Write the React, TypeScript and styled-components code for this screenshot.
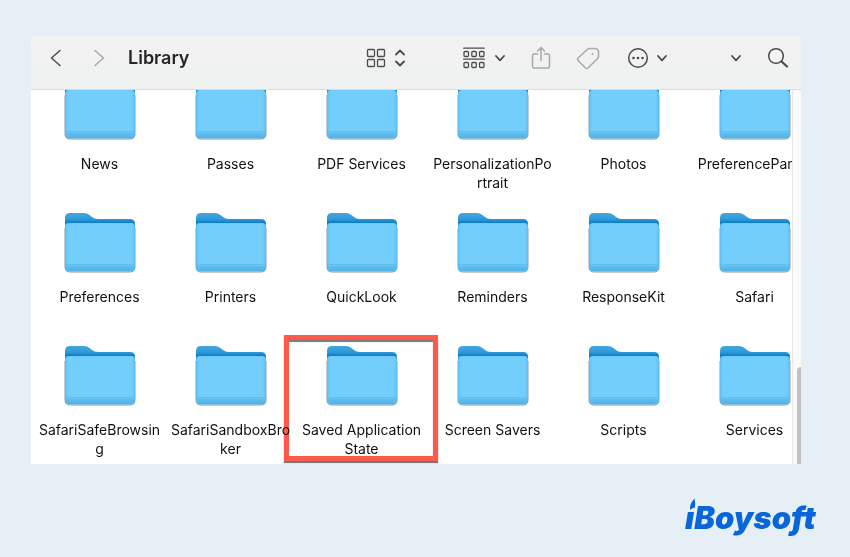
import React from "react";
import styled, { createGlobalStyle, css } from "styled-components";

const GlobalStyle = createGlobalStyle`
  * { box-sizing: border-box; }
  body {
    margin: 0;
    background: #e7eff6;
    font-family: Inter, "Liberation Sans", sans-serif;
    color: #111;
  }
`;

const Page = styled.main`
  display: flex;
  flex-direction: column;
  min-height: 100vh;
  padding: 36px 49px 0 31px;
`;

const FinderWindow = styled.section`
  background: #fff;
`;

const Toolbar = styled.header`
  display: flex;
  align-items: center;
  height: 54px;
  padding: 0 12px 9px 16px;
  background: linear-gradient(#f2f2f2, #eff1f1);
  border-bottom: 1px solid #dcdcdc;
`;

const Title = styled.h1`
  margin: 0 0 0 23px;
  flex: 1;
  font-size: 18px;
  line-height: 22px;
  font-weight: 600;
  color: #262626;
`;

const Tools = styled.div`
  display: flex;
  align-items: center;
`;

const ToolButton = styled.button<{ $dim?: boolean; $gap?: number }>`
  display: flex;
  align-items: center;
  padding: 0;
  margin: 0 0 0 ${(p) => p.$gap ?? 0}px;
  border: 0;
  background: none;
  color: ${(p) => (p.$dim ? "#a9a9a9" : "#4c4c4c")};
  svg { display: block; }
`;

const Icon = styled.svg`
  fill: none;
  stroke: currentColor;
  stroke-width: 1.5;
  stroke-linecap: round;
  stroke-linejoin: round;
`;

const FineIcon = styled(Icon)`
  stroke-width: 1.3;
`;

const BoldIcon = styled(Icon)`
  stroke-width: 1.8;
`;

const Body = styled.div`
  display: flex;
`;

const Scroller = styled.div`
  flex: 1;
  min-width: 0;
  overflow: hidden;
`;

const FolderGrid = styled.ul`
  display: grid;
  grid-template-columns: repeat(6, 131px);
  row-gap: 21px;
  margin: -10px 0 0;
  padding: 0 0 6px 3px;
  list-style: none;
`;

const Cell = styled.li<{ $marked?: boolean }>`
  position: relative;
  display: flex;
  flex-direction: column;
  align-items: center;
  gap: 13px;
  ${(p) =>
    p.$marked &&
    css`
      &::after {
        content: "";
        position: absolute;
        inset: -11px -11px -3px -12px;
        border: 5px solid #fd5a4c;
        box-shadow: 0 2px 1px #777, inset 0 2px 1px #777;
        mix-blend-mode: multiply;
      }
    `}
`;

const Label = styled.span`
  width: 122px;
  min-height: 38px;
  font-size: 14px;
  line-height: 19px;
  text-align: center;
  overflow-wrap: anywhere;
`;

const Track = styled.div`
  display: flex;
  flex-direction: column;
  align-items: flex-end;
  justify-content: flex-end;
  width: 9px;
  background: #fafafa;
  border-left: 1px solid #e6e6e6;
`;

const Thumb = styled.div`
  width: 4px;
  height: 26%;
  border-radius: 4px 0 0 0;
  background: #c1c1c1;
`;

const Brand = styled.footer`
  display: flex;
  justify-content: flex-end;
  margin: 33px -17px 0 0;
`;

const Logo = styled.svg`
  display: block;
  overflow: visible;
  fill: #0866d9;
  font-family: Inter, "Liberation Sans", sans-serif;
  font-size: 31px;
  font-weight: 900;
  font-style: italic;
`;

const Defs = styled.svg`
  position: absolute;
`;

const folders = [
  "News", "Passes", "PDF Services", "PersonalizationPortrait", "Photos", "PreferencePanes",
  "Preferences", "Printers", "QuickLook", "Reminders", "ResponseKit", "Safari",
  "SafariSafeBrowsing", "SafariSandboxBroker", "Saved Application State", "Screen Savers", "Scripts", "Services",
];

function FolderGradients() {
  return (
    <Defs width="0" height="0" aria-hidden="true">
      <defs>
        <linearGradient id="folder-back" x1="0" y1="0" x2="0" y2="12" gradientUnits="userSpaceOnUse">
          <stop offset="0" stopColor="#43a6de" />
          <stop offset="0.5" stopColor="#309bd9" />
          <stop offset="0.8" stopColor="#0d7fc9" />
        </linearGradient>
        <linearGradient id="folder-front" x1="0" y1="9" x2="0" y2="59" gradientUnits="userSpaceOnUse">
          <stop offset="0" stopColor="#69c5f3" />
          <stop offset="0.05" stopColor="#73cefb" />
          <stop offset="0.83" stopColor="#73cefb" />
          <stop offset="0.84" stopColor="#61bff0" />
          <stop offset="0.9" stopColor="#5dbbed" />
          <stop offset="1" stopColor="#4eafe6" />
        </linearGradient>
        <linearGradient id="folder-edge" x1="0" y1="0" x2="1" y2="0">
          <stop offset="0" stopColor="#4db5ec" stopOpacity="0.7" />
          <stop offset="0.06" stopColor="#73cefb" stopOpacity="0" />
          <stop offset="0.94" stopColor="#73cefb" stopOpacity="0" />
          <stop offset="1" stopColor="#4db5ec" stopOpacity="0.7" />
        </linearGradient>
      </defs>
    </Defs>
  );
}

function Folder() {
  const front = "M1 14Q1 10 5 10H67Q71 10 71 14V54Q71 58.500 66.500 58.500H5.500Q1 58.500 1 54Z";
  return (
    <svg width="72" height="61" viewBox="0 0 72 61" aria-hidden="true">
      <path d="M1 15V54Q1 59 6 59H66Q71 59 71 54V15" fill="none" stroke="#5f7280" strokeOpacity="0.7" />
      <path d="M1 16V5Q1 0 6 0H20Q23 0 25.500 2L28 4Q30 6 34 6H66Q71 6 71 11V16Z" fill="url(#folder-back)" />
      <path d={front} fill="url(#folder-front)" />
      <path d={front} fill="url(#folder-edge)" />
      <path d="M1.500 52.500H70.500" stroke="#68c4f2" fill="none" />
    </svg>
  );
}

function Chevron() {
  return (
    <BoldIcon width="10" height="7" viewBox="0 0 10 7">
      <path d="M1 1L5 5.300L9 1" />
    </BoldIcon>
  );
}

function App() {
  return (
    <Page>
      <GlobalStyle />
      <FolderGradients />
      <FinderWindow aria-label="Library">
        <Toolbar>
          <ToolButton aria-label="Back" $gap={3}>
            <Icon width="12" height="18" viewBox="0 0 12 18"><path d="M10 1.500L1.500 9L10 16.500" /></Icon>
          </ToolButton>
          <ToolButton aria-label="Forward" $gap={31} $dim>
            <Icon width="12" height="18" viewBox="0 0 12 18"><path d="M2 1.500L10.500 9L2 16.500" /></Icon>
          </ToolButton>
          <Title>Library</Title>
          <Tools>
            <ToolButton aria-label="Change view">
              <Icon width="40" height="20" viewBox="0 0 40 20">
                <g strokeWidth="1.3">
                  <rect x="1.500" y="1.500" width="7" height="7" rx="1" />
                  <rect x="11.500" y="1.500" width="7" height="7" rx="1" />
                  <rect x="1.500" y="11.500" width="7" height="7" rx="1" />
                  <rect x="11.500" y="11.500" width="7" height="7" rx="1" />
                </g>
                <path d="M30 6.500L34 2.500L38 6.500M30 13.500L34 17.500L38 13.500" strokeWidth="1.800" />
              </Icon>
            </ToolButton>
            <ToolButton aria-label="Group items" $gap={57}>
              <FineIcon width="32" height="22" viewBox="0 0 32 22">
                <path d="M.7 1.200H21.300M.7 12.200H21.300" />
                <rect x="1" y="4.500" width="4.500" height="5" rx="1" />
                <rect x="8.800" y="4.500" width="4.500" height="5" rx="1" />
                <rect x="16.500" y="4.500" width="4.500" height="5" rx="1" />
                <rect x="1" y="15.500" width="4.500" height="5" rx="1" />
                <rect x="8.800" y="15.500" width="4.500" height="5" rx="1" />
                <rect x="16.500" y="15.500" width="4.500" height="5" rx="1" />
              </FineIcon>
              <Chevron />
            </ToolButton>
            <ToolButton aria-label="Share" $gap={26} $dim>
              <Icon width="20" height="24" viewBox="0 0 20 24">
                <path d="M6.500 8H3Q1.500 8 1.500 9.500V20.500Q1.500 22 3 22H17Q18.500 22 18.500 20.500V9.500Q18.500 8 17 8H13.500M10 14.500V1.500M6.500 5L10 1.500L13.500 5" />
              </Icon>
            </ToolButton>
            <ToolButton aria-label="Tags" $gap={25} $dim>
              <Icon width="24" height="24" viewBox="0 0 24 24">
                <path d="M13.500 2.500H19Q21 2.500 22 4L22.500 5V10Q22.500 11.500 21.500 12.500L12 22Q10.800 23 9.500 22L2 14.500Q1 13.200 2 12L11.500 3.300Q12.500 2.500 13.500 2.500Z" />
                <circle cx="16.500" cy="8" r="1" fill="currentColor" stroke="none" />
              </Icon>
            </ToolButton>
            <ToolButton aria-label="More actions" $gap={27}>
              <Icon width="30" height="22" viewBox="0 0 30 22">
                <circle cx="11" cy="11" r="9.300" />
                <g fill="currentColor" stroke="none">
                  <circle cx="6.500" cy="11" r="1.300" />
                  <circle cx="11" cy="11" r="1.300" />
                  <circle cx="15.500" cy="11" r="1.300" />
                </g>
              </Icon>
              <Chevron />
            </ToolButton>
            <ToolButton aria-label="More toolbar items" $gap={64}><Chevron /></ToolButton>
            <ToolButton aria-label="Search" $gap={26}>
              <Icon width="22" height="22" viewBox="0 0 22 22">
                <circle cx="9" cy="9" r="7.300" />
                <path d="M14.500 14.500L20 19.500" strokeWidth="2.200" />
              </Icon>
            </ToolButton>
          </Tools>
        </Toolbar>
        <Body>
          <Scroller>
            <FolderGrid>
              {folders.map((name) => (
                <Cell key={name} $marked={name === "Saved Application State"}>
                  <Folder />
                  <Label>{name}</Label>
                </Cell>
              ))}
            </FolderGrid>
          </Scroller>
          <Track><Thumb /></Track>
        </Body>
      </FinderWindow>
      <Brand>
        <Logo width="133" height="42" viewBox="0 0 133 42" role="img" aria-label="iBoysoft">
          <path d="M9.500 1.500Q10.500 5 10 10.500Q7.500 10.500 5 13Q4.500 6.500 9.500 1.500Z" />
          <text x="0" y="32">ıBoysoft</text>
        </Logo>
      </Brand>
    </Page>
  );
}

export default App;
